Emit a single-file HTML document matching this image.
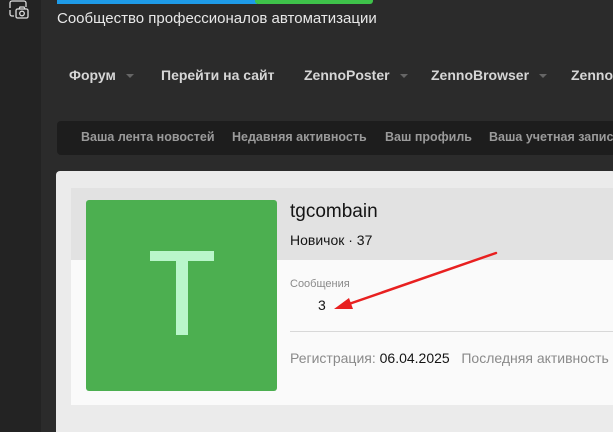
<!DOCTYPE html>
<html style="width:613px;height:432px;overflow:hidden"><head><meta charset="utf-8"><style>
*{margin:0;padding:0;box-sizing:border-box}
body{width:613px;height:432px;overflow:hidden;background:#2b2b2b;font-family:"Liberation Sans","DejaVu Sans",sans-serif;position:relative}
.wrap{position:absolute;left:0;top:0;width:613px;height:432px;overflow:hidden}
.side{position:absolute;left:0;top:0;width:41px;height:432px;background:#232323}
.a{position:absolute;white-space:nowrap}
.nav{font-weight:bold;font-size:14px;color:#d6d6d6;top:67px}
.car{display:inline-block;width:0;height:0;border-left:4px solid transparent;border-right:4px solid transparent;border-top:4px solid #666;vertical-align:middle;margin-left:10px}
.sub{position:absolute;left:57px;top:121px;width:560px;height:34px;background:#1d1d1d;border-radius:4px}
.sn{font-weight:bold;font-size:12.5px;color:#9a9a9a;top:130px}
.card{position:absolute;left:56px;top:171px;width:560px;height:270px;background:#ebebeb;border-radius:4px}
.top{position:absolute;left:71px;top:188px;width:545px;height:72px;background:#e2e2e2}
.bot{position:absolute;left:71px;top:260px;width:545px;height:145px;background:#fafafa}
.av{position:absolute;left:86px;top:200px;width:191px;height:191px;background:#4caf50;border-radius:3px}
</style></head><body><div class="wrap">
<div class="side"></div>
<svg class="a" style="left:8px;top:0" width="22" height="20" viewBox="0 0 22 20" fill="none" stroke="#ddd" stroke-width="1.3"><path d="M2 8V3a2 2 0 0 1 2-2h12a2 2 0 0 1 2 2v4"/><path d="M2 10v4a2 2 0 0 0 2 2h2"/><rect x="8" y="9" width="12" height="9" rx="1.5"/><circle cx="14" cy="13.5" r="2.3"/><path d="M11 9l1-2h4l1 2"/></svg>
<div class="a" style="left:57px;top:-2px;width:200px;height:6px;background:#1e9be8"></div>
<div class="a" style="left:255px;top:-2px;width:118px;height:6px;background:#3ec24a;border-radius:0 0 3px 3px"></div>
<div class="a" style="left:57px;top:10px;font-size:15px;color:#e8e8e8">Сообщество профессионалов автоматизации</div>
<div class="a nav" style="left:69px">Форум<span class="car"></span></div>
<div class="a nav" style="left:161px">Перейти на сайт</div>
<div class="a nav" style="left:304px">ZennoPoster<span class="car"></span></div>
<div class="a nav" style="left:431px">ZennoBrowser<span class="car"></span></div>
<div class="a nav" style="left:571px">ZennoDroid</div>
<div class="sub"></div>
<div class="a sn" style="left:81px">Ваша лента новостей</div>
<div class="a sn" style="left:232px">Недавняя активность</div>
<div class="a sn" style="left:385px">Ваш профиль</div>
<div class="a sn" style="left:489px">Ваша учетная запись</div>
<div class="card"></div>
<div class="top"></div>
<div class="bot"></div>
<div class="av"></div>
<div class="a" style="left:150px;top:251px;width:64px;height:10px;background:#b9f6ca"></div>
<div class="a" style="left:176px;top:251px;width:12px;height:84px;background:#b9f6ca"></div>
<div class="a" style="left:290px;top:201px;font-size:19px;color:#141414">tgcombain</div>
<div class="a" style="left:290px;top:232px;font-size:14px;color:#141414">Новичок · 37</div>
<div class="a" style="left:290px;top:278px;font-size:11px;color:#8a8a8a">Сообщения</div>
<div class="a" style="left:318px;top:297px;font-size:14px;color:#141414">3</div>
<div class="a" style="left:290px;top:331px;width:323px;height:1px;background:#d8d8d8"></div>
<div class="a" style="left:290px;top:350px;font-size:14px;color:#8a8a8a">Регистрация: <span style="color:#141414">06.04.2025</span> &nbsp; Последняя активность</div>
<svg class="a" style="left:0;top:0" width="613" height="432"><line x1="496" y1="253" x2="346" y2="305" stroke="#e82020" stroke-width="2.5" stroke-linecap="round"/><polygon points="334,309 349,298 353,309" fill="#e82020"/></svg>
</div></body></html>
